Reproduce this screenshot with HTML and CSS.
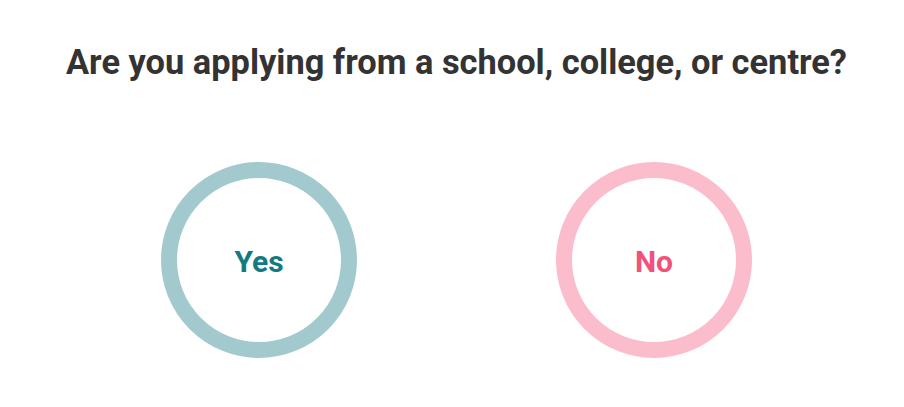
FILE: index.html
```html
<!DOCTYPE html>
<html>
<head>
<meta charset="utf-8">
<link rel="stylesheet" href="styles.css">
</head>
<body>
<main class="page">
  <h1 class="question">Are you applying from a school, college, or centre?</h1>
  <div class="choices">
    <button class="choice choice-yes">Yes</button>
    <button class="choice choice-no">No</button>
  </div>
</main>
</body>
</html>
```
FILE: styles.css
```css
html, body {
  margin: 0;
  padding: 0;
  background: #ffffff;
}
body {
  font-family: Roboto, "Liberation Sans", Arial, sans-serif;
}
.page {
  width: 904px;
  height: 407px;
  box-sizing: border-box;
  padding: 41px 0 0 9px;
  display: flex;
  flex-direction: column;
  align-items: center;
}
.question {
  margin: 0;
  font-size: 34.4px;
  font-weight: 700;
  line-height: 42px;
  color: #333333;
  text-align: center;
}
.choices {
  margin-top: 79px;
  display: flex;
  gap: 199px;
}
.choice {
  width: 196px;
  height: 196px;
  box-sizing: border-box;
  border-radius: 50%;
  border: 16px solid;
  background: #ffffff;
  font-family: Roboto, "Liberation Sans", Arial, sans-serif;
  font-size: 30px;
  font-weight: 700;
  padding: 3px 0 0;
  display: flex;
  align-items: center;
  justify-content: center;
  cursor: pointer;
}
.choice-yes {
  border-color: #a2cace;
  color: #137a82;
}
.choice-no {
  border-color: #fbbccc;
  color: #f0527b;
}
```
